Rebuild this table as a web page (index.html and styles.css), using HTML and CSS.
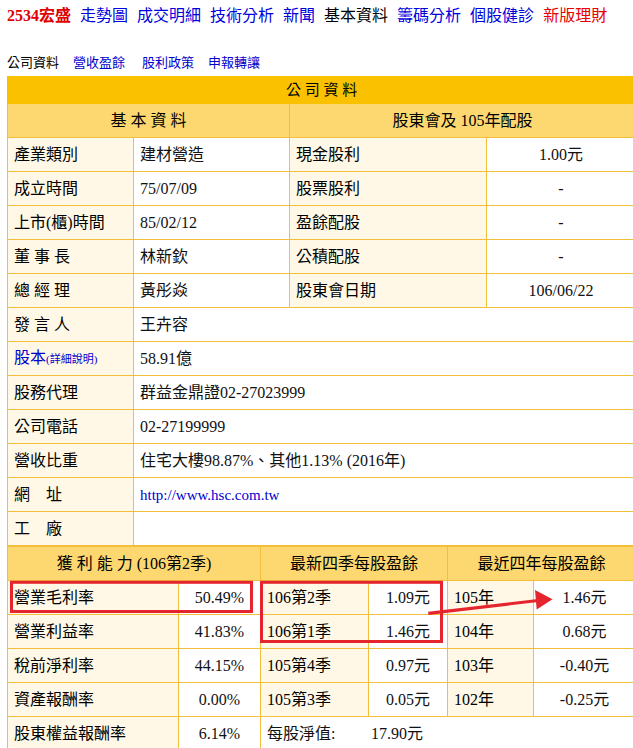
FILE: index.html
```html
<!DOCTYPE html>
<html lang="zh-Hant">
<head>
<meta charset="utf-8">
<title>2534宏盛 公司資料</title>
<link rel="stylesheet" href="styles.css">
</head>
<body>
<div class="page">
  <nav class="topnav">
    <span class="stock">2534宏盛</span>
    <a class="nl">走勢圖</a>
    <a class="nl">成交明細</a>
    <a class="nl">技術分析</a>
    <a class="nl">新聞</a>
    <span class="cur">基本資料</span>
    <a class="nl">籌碼分析</a>
    <a class="nl">個股健診</a>
    <a class="nl red">新版理財</a>
  </nav>
  <nav class="subnav">
    <span class="cur">公司資料</span>
    <a class="sl">營收盈餘</a>
    <a class="sl wide">股利政策</a>
    <a class="sl">申報轉讓</a>
  </nav>

  <table class="info top">
    <colgroup><col class="t1"><col class="t2"><col class="t3"><col class="t4"></colgroup>
    <tr class="title"><td colspan="4">公 司 資 料</td></tr>
    <tr class="hd"><td colspan="2">基 本 資 料</td><td colspan="2">股東會及 105年配股</td></tr>
    <tr><td class="lb">產業類別</td><td class="val">建材營造</td><td class="lb">現金股利</td><td class="ctr">1.00元</td></tr>
    <tr><td class="lb">成立時間</td><td class="val">75/07/09</td><td class="lb">股票股利</td><td class="ctr">-</td></tr>
    <tr><td class="lb">上市(櫃)時間</td><td class="val">85/02/12</td><td class="lb">盈餘配股</td><td class="ctr">-</td></tr>
    <tr><td class="lb">董 事 長</td><td class="val">林新欽</td><td class="lb">公積配股</td><td class="ctr">-</td></tr>
    <tr><td class="lb">總 經 理</td><td class="val">黃彤焱</td><td class="lb">股東會日期</td><td class="ctr">106/06/22</td></tr>
    <tr><td class="lb">發 言 人</td><td class="val" colspan="3">王卉容</td></tr>
    <tr><td class="lb"><a class="blue">股本<small>(詳細說明)</small></a></td><td class="val" colspan="3">58.91億</td></tr>
    <tr><td class="lb">股務代理</td><td class="val" colspan="3">群益金鼎證02-27023999</td></tr>
    <tr><td class="lb">公司電話</td><td class="val" colspan="3">02-27199999</td></tr>
    <tr><td class="lb">營收比重</td><td class="val" colspan="3">住宅大樓98.87%、其他1.13% (2016年)</td></tr>
    <tr><td class="lb">網　址</td><td class="val" colspan="3"><a class="url">http://www.hsc.com.tw</a></td></tr>
    <tr><td class="lb">工　廠</td><td class="val" colspan="3"></td></tr>
  </table>

  <table class="info bottom">
    <colgroup><col class="b1"><col class="b2"><col class="b3"><col class="b4"><col class="b5"><col class="b6"></colgroup>
    <tr class="hd hd2"><td colspan="2">獲 利 能 力 (106第2季)</td><td colspan="2">最新四季每股盈餘</td><td colspan="2">最近四年每股盈餘</td></tr>
    <tr><td class="lb">營業毛利率</td><td class="ctr">50.49%</td><td class="lb">106第2季</td><td class="ctr">1.09元</td><td class="lb">105年</td><td class="ctr">1.46元</td></tr>
    <tr><td class="lb">營業利益率</td><td class="ctr">41.83%</td><td class="lb">106第1季</td><td class="ctr">1.46元</td><td class="lb">104年</td><td class="ctr">0.68元</td></tr>
    <tr><td class="lb">稅前淨利率</td><td class="ctr">44.15%</td><td class="lb">105第4季</td><td class="ctr">0.97元</td><td class="lb">103年</td><td class="ctr">-0.40元</td></tr>
    <tr><td class="lb">資產報酬率</td><td class="ctr">0.00%</td><td class="lb">105第3季</td><td class="ctr">0.05元</td><td class="lb">102年</td><td class="ctr">-0.25元</td></tr>
    <tr><td class="lb">股東權益報酬率</td><td class="ctr">6.14%</td><td class="val" colspan="4"><span class="nav-label">每股淨值:</span><span>17.90元</span></td></tr>
  </table>

  <svg class="marks" width="633" height="748" viewBox="0 0 633 748" aria-hidden="true">
    <rect x="11.5" y="582.3" width="240" height="29.2" fill="none" stroke="#e5252d" stroke-width="3"/>
    <rect x="261.5" y="582.3" width="180" height="59.2" fill="none" stroke="#e5252d" stroke-width="3"/>
    <line x1="428.3" y1="613.3" x2="538" y2="600.5" stroke="#e5252d" stroke-width="3.2"/>
    <polygon points="535,590 536.7,609.5 552.5,599.3" fill="#e5252d"/>
  </svg>
</div>
</body>
</html>
```
FILE: styles.css
```css
html { overflow: hidden; }
body {
  margin: 0;
  font-family: "Liberation Serif", "Noto Sans CJK TC", serif;
  color: #000;
  background: #fff;
}
.page {
  position: relative;
  padding: 6px 0 0 7px;
}
.topnav {
  display: flex;
  gap: 9px;
  font-size: 16px;
  line-height: 20px;
  white-space: nowrap;
}
.topnav .stock { color: #e00000; font-weight: bold; }
.topnav .nl { color: #0000dd; }
.topnav .red { color: #e80000; }
.topnav .cur { color: #000; }

.subnav {
  display: flex;
  gap: 14px;
  margin-top: 28px;
  font-family: "Noto Sans CJK TC", sans-serif;
  font-size: 13px;
  line-height: 16px;
  white-space: nowrap;
}
.subnav .sl { color: #0000cc; }
.subnav .wide { margin-left: 3px; }

.info {
  border-collapse: collapse;
  table-layout: fixed;
  width: 628px;
  font-size: 16px;
}
.top { margin-top: 6px; }
.bottom { margin-top: -1px; }
.info td {
  border: 1px solid #f2bf3c;
  padding: 0 6px;
  height: 33px;
  line-height: 20px;
  white-space: nowrap;
  overflow: hidden;
}
.t1 { width: 126px; }
.t2 { width: 156px; }
.t3 { width: 197px; }
.t4 { width: 149px; }
.b1 { width: 171px; }
.b2 { width: 82px; }
.b3 { width: 108px; }
.b4 { width: 79px; }
.b5 { width: 86px; }
.b6 { width: 102px; }

.title td {
  background: #f9c100;
  text-align: center;
  height: 26px;
  font-size: 15px;
  border-color: #f9c100;
}
.hd td {
  background: #fdd870;
  text-align: center;
  border-left-color: #f2bf3c;
}
.hd2 td { height: 33px; border-top: 2px solid #f2bf3c; }
.lb { background: #fff8e6; }
.val { background: #fff; color: #111; }
.ctr { background: #fff; text-align: center; color: #111; }
.blue { color: #0000cc; }
.blue small { font-size: 11px; }
.url { color: #0000cc; font-size: 15px; }
.nav-label { display: inline-block; width: 104px; }

.marks {
  position: absolute;
  left: 0;
  top: 0;
  pointer-events: none;
}
```
